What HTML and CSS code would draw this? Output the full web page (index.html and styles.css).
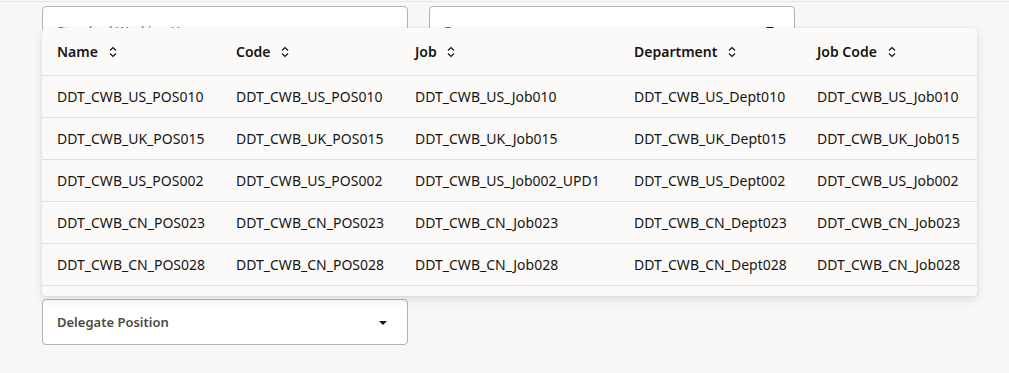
FILE: index.html
```html
<!DOCTYPE html>
<html lang="en">
<head>
    <meta charset="UTF-8">
    <title>Delegate Position</title>
    <link rel="stylesheet" href="styles.css">
</head>
<body>
    <div class="page">
        <div class="form-grid">
            <div class="field">
                <span class="field-label">Standard Working Hours</span>
            </div>
            <div class="field">
                <span class="field-label">Frequency</span>
                <span class="caret"></span>
            </div>
        </div>

        <div class="popup">
            <table class="grid">
                <thead>
                    <tr>
                        <th class="c1">Name <svg class="sort" viewBox="0 0 8 12"><path d="M1 4.5 L4 1.5 L7 4.5 M1 7.5 L4 10.5 L7 7.5"/></svg></th>
                        <th class="c2">Code <svg class="sort" viewBox="0 0 8 12"><path d="M1 4.5 L4 1.5 L7 4.5 M1 7.5 L4 10.5 L7 7.5"/></svg></th>
                        <th class="c3">Job <svg class="sort" viewBox="0 0 8 12"><path d="M1 4.5 L4 1.5 L7 4.5 M1 7.5 L4 10.5 L7 7.5"/></svg></th>
                        <th class="c4">Department <svg class="sort" viewBox="0 0 8 12"><path d="M1 4.5 L4 1.5 L7 4.5 M1 7.5 L4 10.5 L7 7.5"/></svg></th>
                        <th class="c5">Job Code <svg class="sort" viewBox="0 0 8 12"><path d="M1 4.5 L4 1.5 L7 4.5 M1 7.5 L4 10.5 L7 7.5"/></svg></th>
                    </tr>
                </thead>
                <tbody>
                    <tr>
                        <td>DDT_CWB_US_POS010</td>
                        <td>DDT_CWB_US_POS010</td>
                        <td>DDT_CWB_US_Job010</td>
                        <td>DDT_CWB_US_Dept010</td>
                        <td>DDT_CWB_US_Job010</td>
                    </tr>
                    <tr>
                        <td>DDT_CWB_UK_POS015</td>
                        <td>DDT_CWB_UK_POS015</td>
                        <td>DDT_CWB_UK_Job015</td>
                        <td>DDT_CWB_UK_Dept015</td>
                        <td>DDT_CWB_UK_Job015</td>
                    </tr>
                    <tr>
                        <td>DDT_CWB_US_POS002</td>
                        <td>DDT_CWB_US_POS002</td>
                        <td>DDT_CWB_US_Job002_UPD1</td>
                        <td>DDT_CWB_US_Dept002</td>
                        <td>DDT_CWB_US_Job002</td>
                    </tr>
                    <tr>
                        <td>DDT_CWB_CN_POS023</td>
                        <td>DDT_CWB_CN_POS023</td>
                        <td>DDT_CWB_CN_Job023</td>
                        <td>DDT_CWB_CN_Dept023</td>
                        <td>DDT_CWB_CN_Job023</td>
                    </tr>
                    <tr>
                        <td>DDT_CWB_CN_POS028</td>
                        <td>DDT_CWB_CN_POS028</td>
                        <td>DDT_CWB_CN_Job028</td>
                        <td>DDT_CWB_CN_Dept028</td>
                        <td>DDT_CWB_CN_Job028</td>
                    </tr>
                </tbody>
            </table>
        </div>

        <div class="form-grid lower">
            <div class="field select">
                <span class="field-label strong">Delegate Position</span>
                <span class="caret"></span>
            </div>
        </div>
    </div>
</body>
</html>
```

FILE: styles.css
```css
:root {
    --bg: #f8f7f6;
    --panel: #fbfaf9;
    --text: #161513;
    --muted: #6f6a65;
    --border: #b7b2ad;
    --line: #e4e1dd;
}
* { box-sizing: border-box; }
body {
    margin: 0;
    font-family: 'Noto Sans', 'Open Sans', Arial, sans-serif;
    background: var(--bg);
    color: var(--text);
    height: 373px;
    overflow: hidden;
}
.page {
    position: relative;
    border-top: 1px solid #e9e7e5;
    margin-top: 1px;
    padding: 4px 0 0 42px;
    height: 100%;
}
.form-grid {
    display: grid;
    grid-template-columns: 366px 366px;
    column-gap: 21px;
}
.form-grid.lower {
    margin-top: 247px;
}
.field {
    height: 46px;
    border: 1px solid var(--border);
    border-radius: 4px;
    background: #fff;
    display: flex;
    align-items: center;
    justify-content: space-between;
    padding: 0 20px 0 14px;
}
.form-grid:first-child .field {
    align-items: flex-start;
    padding-top: 15px;
}
.field-label {
    font-size: 13px;
    color: var(--muted);
}
.field-label.strong {
    font-weight: 600;
    color: #4f4a45;
}
.caret {
    width: 0;
    height: 0;
    border-left: 4.5px solid transparent;
    border-right: 4.5px solid transparent;
    border-top: 4.5px solid var(--text);
    margin-top: 1px;
}
.form-grid:first-child .caret {
    margin-top: 5px;
}
.popup {
    position: absolute;
    top: 26px;
    left: 42px;
    width: 935px;
    height: 268px;
    background: var(--panel);
    border-radius: 4px;
    box-shadow: 0 4px 10px rgba(0,0,0,0.10), 0 0 2px rgba(0,0,0,0.10);
    overflow: hidden;
    z-index: 2;
}
.grid {
    width: 100%;
    border-collapse: collapse;
    table-layout: fixed;
}
.grid th, .grid td {
    text-align: left;
    padding: 0 0 0 15px;
    white-space: nowrap;
    font-size: 14px;
}
.grid th {
    height: 47px;
    font-weight: 600;
    color: var(--text);
    border-bottom: 1px solid var(--line);
}
.grid td {
    height: 42px;
    border-bottom: 1px solid var(--line);
    color: var(--text);
}
.grid .c1 { width: 179px; }
.grid .c2 { width: 179px; }
.grid .c3 { width: 219px; }
.grid .c4 { width: 183px; }
.grid .c5 { width: 175px; }
.sort {
    width: 8px;
    height: 12px;
    margin-left: 7px;
    vertical-align: -1px;
    fill: none;
    stroke: var(--text);
    stroke-width: 1.2;
}
```
